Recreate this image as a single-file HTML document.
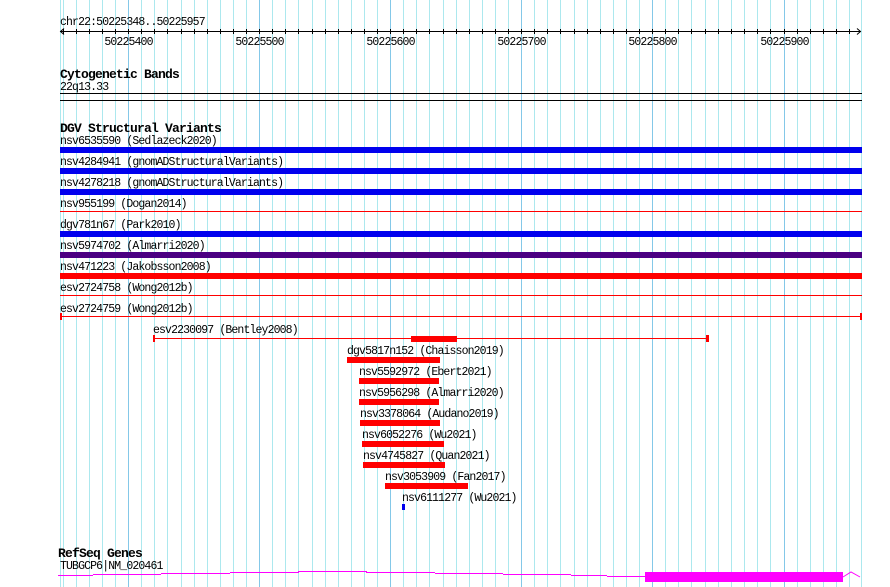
<!DOCTYPE html>
<html><head><meta charset="utf-8"><style>
html,body{margin:0;padding:0;background:#fff;width:890px;height:587px;overflow:hidden}
svg{display:block}
text{font-family:"Liberation Mono","DejaVu Sans Mono",monospace;font-size:11.5px;letter-spacing:-0.87px;fill:#000}
.t{font-weight:bold;font-size:13px;letter-spacing:-0.8px}
</style></head><body>
<svg width="890" height="587" viewBox="0 0 890 587" xmlns="http://www.w3.org/2000/svg" shape-rendering="crispEdges">
<g stroke="#ace8ee" stroke-width="1">
<line x1="60.5" y1="0" x2="60.5" y2="587"/>
<line x1="63.5" y1="0" x2="63.5" y2="587"/>
<line x1="76.5" y1="0" x2="76.5" y2="587"/>
<line x1="89.5" y1="0" x2="89.5" y2="587"/>
<line x1="102.5" y1="0" x2="102.5" y2="587"/>
<line x1="115.5" y1="0" x2="115.5" y2="587"/>
<line x1="141.5" y1="0" x2="141.5" y2="587"/>
<line x1="154.5" y1="0" x2="154.5" y2="587"/>
<line x1="167.5" y1="0" x2="167.5" y2="587"/>
<line x1="181.5" y1="0" x2="181.5" y2="587"/>
<line x1="194.5" y1="0" x2="194.5" y2="587"/>
<line x1="207.5" y1="0" x2="207.5" y2="587"/>
<line x1="220.5" y1="0" x2="220.5" y2="587"/>
<line x1="233.5" y1="0" x2="233.5" y2="587"/>
<line x1="246.5" y1="0" x2="246.5" y2="587"/>
<line x1="272.5" y1="0" x2="272.5" y2="587"/>
<line x1="285.5" y1="0" x2="285.5" y2="587"/>
<line x1="298.5" y1="0" x2="298.5" y2="587"/>
<line x1="312.5" y1="0" x2="312.5" y2="587"/>
<line x1="325.5" y1="0" x2="325.5" y2="587"/>
<line x1="338.5" y1="0" x2="338.5" y2="587"/>
<line x1="351.5" y1="0" x2="351.5" y2="587"/>
<line x1="364.5" y1="0" x2="364.5" y2="587"/>
<line x1="377.5" y1="0" x2="377.5" y2="587"/>
<line x1="403.5" y1="0" x2="403.5" y2="587"/>
<line x1="416.5" y1="0" x2="416.5" y2="587"/>
<line x1="429.5" y1="0" x2="429.5" y2="587"/>
<line x1="443.5" y1="0" x2="443.5" y2="587"/>
<line x1="456.5" y1="0" x2="456.5" y2="587"/>
<line x1="469.5" y1="0" x2="469.5" y2="587"/>
<line x1="482.5" y1="0" x2="482.5" y2="587"/>
<line x1="495.5" y1="0" x2="495.5" y2="587"/>
<line x1="508.5" y1="0" x2="508.5" y2="587"/>
<line x1="534.5" y1="0" x2="534.5" y2="587"/>
<line x1="547.5" y1="0" x2="547.5" y2="587"/>
<line x1="560.5" y1="0" x2="560.5" y2="587"/>
<line x1="574.5" y1="0" x2="574.5" y2="587"/>
<line x1="587.5" y1="0" x2="587.5" y2="587"/>
<line x1="600.5" y1="0" x2="600.5" y2="587"/>
<line x1="613.5" y1="0" x2="613.5" y2="587"/>
<line x1="626.5" y1="0" x2="626.5" y2="587"/>
<line x1="639.5" y1="0" x2="639.5" y2="587"/>
<line x1="665.5" y1="0" x2="665.5" y2="587"/>
<line x1="678.5" y1="0" x2="678.5" y2="587"/>
<line x1="691.5" y1="0" x2="691.5" y2="587"/>
<line x1="705.5" y1="0" x2="705.5" y2="587"/>
<line x1="718.5" y1="0" x2="718.5" y2="587"/>
<line x1="731.5" y1="0" x2="731.5" y2="587"/>
<line x1="744.5" y1="0" x2="744.5" y2="587"/>
<line x1="757.5" y1="0" x2="757.5" y2="587"/>
<line x1="770.5" y1="0" x2="770.5" y2="587"/>
<line x1="797.5" y1="0" x2="797.5" y2="587"/>
<line x1="810.5" y1="0" x2="810.5" y2="587"/>
<line x1="823.5" y1="0" x2="823.5" y2="587"/>
<line x1="836.5" y1="0" x2="836.5" y2="587"/>
<line x1="849.5" y1="0" x2="849.5" y2="587"/>
<line x1="861.5" y1="0" x2="861.5" y2="587"/>
</g>
<g stroke="#84c8e8" stroke-width="1">
<line x1="128.5" y1="0" x2="128.5" y2="587"/>
<line x1="259.5" y1="0" x2="259.5" y2="587"/>
<line x1="390.5" y1="0" x2="390.5" y2="587"/>
<line x1="521.5" y1="0" x2="521.5" y2="587"/>
<line x1="652.5" y1="0" x2="652.5" y2="587"/>
<line x1="784.5" y1="0" x2="784.5" y2="587"/>
</g>

<text x="60" y="25">chr22:50225348..50225957</text>
<g stroke="#000" stroke-width="1">
<line x1="60" y1="31.5" x2="861" y2="31.5"/>
<path d="M64 28.5 L60.5 31.5 L64 34.5 M857 28.5 L860.5 31.5 L857 34.5" fill="none" shape-rendering="auto"/>
<path d="M63.5 29v5M76.5 29v5M89.5 29v5M102.5 29v5M115.5 29v5M128.5 29v5M141.5 29v5M154.5 29v5M167.5 29v5M181.5 29v5M194.5 29v5M207.5 29v5M220.5 29v5M233.5 29v5M246.5 29v5M259.5 29v5M272.5 29v5M285.5 29v5M298.5 29v5M312.5 29v5M325.5 29v5M338.5 29v5M351.5 29v5M364.5 29v5M377.5 29v5M390.5 29v5M403.5 29v5M416.5 29v5M429.5 29v5M443.5 29v5M456.5 29v5M469.5 29v5M482.5 29v5M495.5 29v5M508.5 29v5M521.5 29v5M534.5 29v5M547.5 29v5M560.5 29v5M574.5 29v5M587.5 29v5M600.5 29v5M613.5 29v5M626.5 29v5M639.5 29v5M652.5 29v5M665.5 29v5M678.5 29v5M691.5 29v5M705.5 29v5M718.5 29v5M731.5 29v5M744.5 29v5M757.5 29v5M770.5 29v5M784.5 29v5M797.5 29v5M810.5 29v5M823.5 29v5M836.5 29v5M849.5 29v5"/>
</g>
<g text-anchor="middle">
<text x="128.5" y="45">50225400</text>
<text x="259.5" y="45">50225500</text>
<text x="390.5" y="45">50225600</text>
<text x="521.5" y="45">50225700</text>
<text x="652.5" y="45">50225800</text>
<text x="784.5" y="45">50225900</text>
</g>

<text class="t" x="60" y="78">Cytogenetic Bands</text>
<text x="60" y="90">22q13.33</text>
<rect x="60" y="93" width="802" height="1" fill="#000"/>
<rect x="60" y="100" width="802" height="1" fill="#000"/>

<text class="t" x="60" y="132">DGV Structural Variants</text>
<text x="60" y="144">nsv6535590 (Sedlazeck2020)</text>
<rect x="60" y="147" width="802" height="6" fill="#0000ee"/>
<text x="60" y="165">nsv4284941 (gnomADStructuralVariants)</text>
<rect x="60" y="168" width="802" height="6" fill="#0000ee"/>
<text x="60" y="186">nsv4278218 (gnomADStructuralVariants)</text>
<rect x="60" y="189" width="802" height="6" fill="#0000ee"/>
<text x="60" y="207">nsv955199 (Dogan2014)</text>
<rect x="60" y="211" width="802" height="1" fill="#ff0000"/>
<text x="60" y="228">dgv781n67 (Park2010)</text>
<rect x="60" y="231" width="802" height="6" fill="#0000ee"/>
<text x="60" y="249">nsv5974702 (Almarri2020)</text>
<rect x="60" y="252" width="802" height="6" fill="#4b0082"/>
<text x="60" y="270">nsv471223 (Jakobsson2008)</text>
<rect x="60" y="273" width="802" height="6" fill="#ff0000"/>
<text x="60" y="291">esv2724758 (Wong2012b)</text>
<rect x="60" y="295" width="802" height="1" fill="#ff0000"/>
<text x="60" y="312">esv2724759 (Wong2012b)</text>
<rect x="60" y="316" width="802" height="1" fill="#ff0000"/>
<rect x="60" y="313" width="2" height="7" fill="#ff0000"/>
<rect x="860" y="313" width="2" height="7" fill="#ff0000"/>

<text x="153" y="333">esv2230097 (Bentley2008)</text>
<rect x="153" y="338" width="556" height="1" fill="#ff0000"/>
<rect x="153" y="335" width="2" height="7" fill="#ff0000"/>
<rect x="706" y="335" width="3" height="7" fill="#ff0000"/>
<rect x="411" y="336" width="46" height="6" fill="#ff0000"/>

<text x="347" y="354">dgv5817n152 (Chaisson2019)</text>
<rect x="347" y="357" width="93" height="6" fill="#ff0000"/>
<text x="359" y="375">nsv5592972 (Ebert2021)</text>
<rect x="359" y="378" width="80" height="6" fill="#ff0000"/>
<text x="359" y="396">nsv5956298 (Almarri2020)</text>
<rect x="359" y="399" width="80" height="6" fill="#ff0000"/>
<text x="360" y="417">nsv3378064 (Audano2019)</text>
<rect x="360" y="420" width="80" height="6" fill="#ff0000"/>
<text x="362" y="438">nsv6052276 (Wu2021)</text>
<rect x="362" y="441" width="82" height="6" fill="#ff0000"/>
<text x="363" y="459">nsv4745827 (Quan2021)</text>
<rect x="363" y="462" width="82" height="6" fill="#ff0000"/>
<text x="385" y="480">nsv3053909 (Fan2017)</text>
<rect x="385" y="483" width="83" height="6" fill="#ff0000"/>
<text x="402" y="501">nsv6111277 (Wu2021)</text>
<rect x="402" y="504" width="3" height="6" fill="#0000ee"/>

<text class="t" x="58" y="557">RefSeq Genes</text>
<text x="60" y="569">TUBGCP6|NM_020461</text>
<g fill="#ff00ff">
<rect x="58" y="575" width="35" height="1"/>
<rect x="93" y="574" width="68" height="1"/>
<rect x="161" y="573" width="69" height="1"/>
<rect x="230" y="572" width="69" height="1"/>
<rect x="298" y="571" width="69" height="1"/>
<rect x="366" y="572" width="69" height="1"/>
<rect x="435" y="573" width="68" height="1"/>
<rect x="503" y="574" width="68" height="1"/>
<rect x="571" y="575" width="36" height="1"/>
<rect x="607" y="576" width="38" height="1"/>
<rect x="645" y="572" width="198" height="10"/>
</g>
<path d="M843 577 L851 572 L860 577" stroke="#ff00ff" fill="none" stroke-width="1" shape-rendering="auto"/>
</svg>
</body></html>
